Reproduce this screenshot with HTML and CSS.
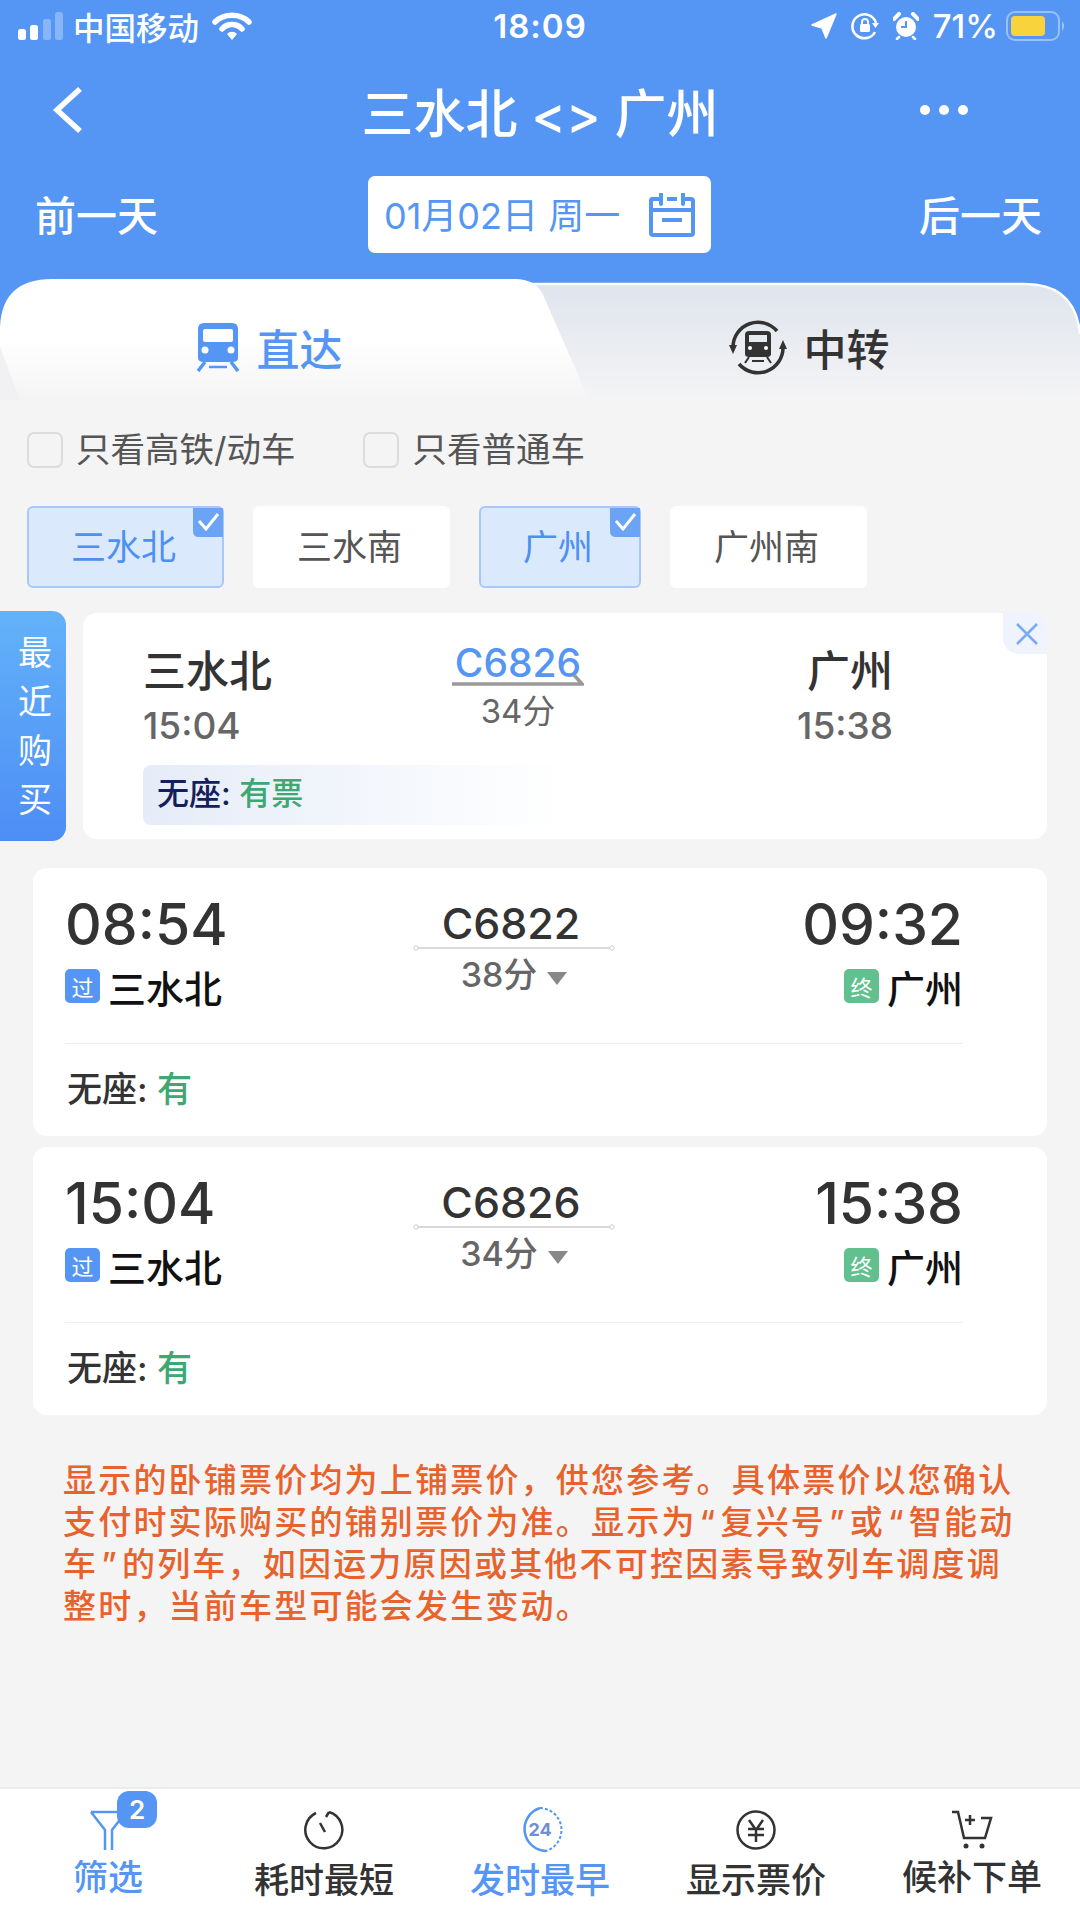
FILE: index.html
```html
<!DOCTYPE html>
<html lang="zh-CN">
<head>
    <meta charset="UTF-8">
    <meta name="viewport" content="width=device-width, initial-scale=1.0">
    <title>三水北 &lt;&gt; 广州</title>
    <link rel="stylesheet" href="styles.css">
</head>
<body>
<div class="page">

    <header class="header">
        <div class="status-bar">
            <div class="status-left">
                <svg class="signal" width="46" height="30" viewBox="0 0 46 30">
                    <rect x="0" y="18" width="8" height="11" rx="2.5" fill="#fff"/>
                    <rect x="12" y="14" width="8" height="15" rx="2.5" fill="#fff"/>
                    <rect x="25" y="8" width="8" height="21" rx="2.5" fill="#fff" opacity=".3"/>
                    <rect x="37" y="1" width="8" height="28" rx="2.5" fill="#fff" opacity=".3"/>
                </svg>
                <span class="carrier">中国移动</span>
                <svg class="wifi" width="40" height="30" viewBox="0 0 40 30">
                    <path d="M3 11 C12 2 28 2 37 11" fill="none" stroke="#fff" stroke-width="5.5" stroke-linecap="round"/>
                    <path d="M10 18 C15 12 25 12 30 18" fill="none" stroke="#fff" stroke-width="5.5" stroke-linecap="round"/>
                    <path d="M15 23 C18 20 22 20 25 23 L20 29 Z" fill="#fff"/>
                </svg>
            </div>
            <div class="status-time">18:09</div>
            <div class="status-right">
                <svg width="26" height="26" viewBox="0 0 26 26"><path d="M25 1 L15 25 L11 15 L1 12 Z" fill="#fff" stroke="#fff" stroke-width="1.5" stroke-linejoin="round"/></svg>
                <svg width="28" height="28" viewBox="0 0 28 28">
                    <path d="M24 20 A12 12 0 1 1 25 11" fill="none" stroke="#fff" stroke-width="2.6"/>
                    <path d="M21 11 H28 L24.5 16 Z" fill="#fff"/>
                    <rect x="9" y="12" width="10" height="8" rx="1.5" fill="#fff"/>
                    <path d="M11 12 V10 A3 3 0 0 1 17 10 V12" fill="none" stroke="#fff" stroke-width="1.8"/>
                </svg>
                <svg width="26" height="28" viewBox="0 0 26 28">
                    <circle cx="13" cy="15" r="10" fill="#fff"/>
                    <path d="M13 9 V15 H8" fill="none" stroke="#5596f4" stroke-width="2"/>
                    <path d="M1 7 L6 2 M25 7 L20 2" stroke="#fff" stroke-width="4" stroke-linecap="round"/>
                    <path d="M6 25 L4 27 M20 25 L22 27" stroke="#fff" stroke-width="2.5" stroke-linecap="round"/>
                </svg>
                <span class="battery-text">71%</span>
                <svg width="60" height="30" viewBox="0 0 60 30">
                    <rect x="1" y="1" width="52" height="28" rx="8" fill="none" stroke="#fff" stroke-opacity=".4" stroke-width="2"/>
                    <rect x="5" y="5" width="34" height="20" rx="4" fill="#f9d33c"/>
                    <path d="M56 10 Q60 15 56 20 Z" fill="#fff" fill-opacity=".45"/>
                </svg>
            </div>
        </div>

        <div class="nav">
            <div class="nav-side">
                <svg class="nav-back" width="32" height="46" viewBox="0 0 32 46"><path d="M28 2 L5 23 L28 44" fill="none" stroke="#fff" stroke-width="5.5"/></svg>
            </div>
            <h1 class="nav-title">三水北 &lt;&gt; 广州</h1>
            <div class="nav-side nav-more">
                <span class="dot"></span><span class="dot"></span><span class="dot"></span>
            </div>
        </div>

        <div class="date-row">
            <span class="date-link">前一天</span>
            <div class="date-box">
                <span class="date-text">01月02日 周一</span>
                <svg width="46" height="44" viewBox="0 0 46 44">
                    <path d="M12 6 H3 Q2 6 2 8 V40 Q2 42 4 42 H42 Q44 42 44 40 V8 Q44 6 42 6 H34 M18 6 H28 M2 17 H44" fill="none" stroke="#5596f4" stroke-width="4"/>
                    <path d="M12 1 V11 M34 1 V11" stroke="#5596f4" stroke-width="4" stroke-linecap="round"/>
                    <rect x="13" y="25" width="20" height="4" fill="#5596f4"/>
                </svg>
            </div>
            <span class="date-link">后一天</span>
        </div>
    </header>

    <div class="tabs">
        <svg class="tabs-bg" width="1080" height="121" viewBox="0 0 1080 121">
            <defs>
                <linearGradient id="tabGrey" x1="0" y1="0" x2="0" y2="1">
                    <stop offset="0" stop-color="#dfe4ed"/>
                    <stop offset="1" stop-color="#f4f4f5"/>
                </linearGradient>
                <linearGradient id="tabWhite" x1="0" y1="0" x2="0" y2="1">
                    <stop offset=".5" stop-color="#fff"/>
                    <stop offset="1" stop-color="#f4f4f5"/>
                </linearGradient>
            </defs>
            <rect width="1080" height="60" fill="#5596f4"/>
            <path d="M0 121 V60 Q0 5 50 5 H1025 Q1075 5 1080 55 V121 Z" fill="url(#tabGrey)"/>
            <path d="M500 5 H1025 Q1075 5 1080 55" fill="none" stroke="#fff" stroke-width="2.5"/>
            <path d="M0 121 V48 Q2 0 52 0 H515 Q537 0 544 18 L589 121 Z" fill="url(#tabWhite)"/>
            <path d="M0 121 V68 L20 121 Z" fill="#f1f1f3"/>
        </svg>
        <div class="tab tab-active">
            <svg width="44" height="50" viewBox="0 0 44 50">
                <path d="M8 1 H36 Q42 1 42 7 V36 Q42 40 36 40 H8 Q2 40 2 36 V7 Q2 1 8 1 Z" fill="#5596f4"/>
                <rect x="7" y="7" width="30" height="13" rx="2" fill="#fff"/>
                <circle cx="9" cy="28" r="3.5" fill="#fff"/>
                <circle cx="35" cy="28" r="3.5" fill="#fff"/>
                <path d="M9 40 L2 49 M35 40 L42 49" stroke="#5596f4" stroke-width="3.5"/>
                <path d="M13 45 H31" stroke="#5596f4" stroke-width="2.5"/>
            </svg>
            <span>直达</span>
        </div>
        <div class="tab">
            <svg width="58" height="56" viewBox="0 0 58 56">
                <path d="M4 28 A25 25 0 0 1 48 12 M54 28 A25 25 0 0 1 10 45" fill="none" stroke="#333" stroke-width="3.5"/>
                <path d="M0 26 L8 26 L4 35 Z M58 30 L50 30 L54 21 Z" fill="#333"/>
                <path d="M20 12 H38 Q42 12 42 16 V35 Q42 38 38 38 H20 Q16 38 16 35 V16 Q16 12 20 12 Z" fill="#333"/>
                <rect x="20" y="16" width="18" height="7" fill="#e6e9f0"/>
                <circle cx="21" cy="29" r="2" fill="#fff"/>
                <circle cx="37" cy="29" r="2" fill="#fff"/>
                <path d="M20 38 L16 44 M38 38 L42 44 M23 42 H35" stroke="#333" stroke-width="2"/>
            </svg>
            <span>中转</span>
        </div>
    </div>

    <div class="filters">
        <label class="check"><span class="check-box"></span><span class="check-text">只看高铁/动车</span></label>
        <label class="check"><span class="check-box"></span><span class="check-text">只看普通车</span></label>
    </div>

    <div class="chips">
        <div class="chip chip-on">三水北
            <svg class="chip-mark" width="30" height="29" viewBox="0 0 30 29"><path d="M0 0 H30 V29 H6 Q0 29 0 23 Z" fill="#6ba3f5"/><path d="M6 13 L13 21 L25 6" fill="none" stroke="#fff" stroke-width="3"/></svg>
        </div>
        <div class="chip">三水南</div>
        <div class="chip chip-on">广州
            <svg class="chip-mark" width="30" height="29" viewBox="0 0 30 29"><path d="M0 0 H30 V29 H6 Q0 29 0 23 Z" fill="#6ba3f5"/><path d="M6 13 L13 21 L25 6" fill="none" stroke="#fff" stroke-width="3"/></svg>
        </div>
        <div class="chip">广州南</div>
    </div>

    <div class="recent">
        <div class="recent-tab">最近购买</div>
        <div class="recent-card">
            <div class="recent-close">
                <svg width="24" height="24" viewBox="0 0 24 24"><path d="M2 2 L22 22 M22 2 L2 22" stroke="#7aabf2" stroke-width="2.5"/></svg>
            </div>
            <div class="recent-main">
                <div class="recent-stop">
                    <div class="recent-name">三水北</div>
                    <div class="recent-time">15:04</div>
                </div>
                <div class="recent-train">
                    <div class="recent-no">C6826</div>
                    <svg class="recent-arrow" width="132" height="12" viewBox="0 0 132 12"><path d="M0 10 H130 L122 1" fill="none" stroke="#999" stroke-width="3.5"/></svg>
                    <div class="recent-dur">34分</div>
                </div>
                <div class="recent-stop recent-stop-end">
                    <div class="recent-name">广州</div>
                    <div class="recent-time">15:38</div>
                </div>
            </div>
            <div class="recent-seat"><span class="seat-dark">无座:</span> <span class="seat-green">有票</span></div>
        </div>
    </div>

    <div class="train-card train-card-first">
        <div class="train-main">
            <div>
                <div class="train-time">08:54</div>
                <div class="train-stop"><span class="tag tag-blue">过</span>三水北</div>
            </div>
            <div class="train-mid">
                <div class="train-no">C6822</div>
                <svg class="train-line" width="202" height="8" viewBox="0 0 202 8"><path d="M4 4 H198" stroke="#ccc" stroke-width="1.5"/><circle cx="3" cy="4" r="2.2" fill="#fff" stroke="#ccc"/><circle cx="199" cy="4" r="2.2" fill="#fff" stroke="#ccc"/></svg>
                <div class="train-dur">38分<span class="tri"></span></div>
            </div>
            <div class="train-end">
                <div class="train-time">09:32</div>
                <div class="train-stop"><span class="tag tag-green">终</span>广州</div>
            </div>
        </div>
        <div class="train-seat">无座: <span class="seat-green">有</span></div>
    </div>

    <div class="train-card">
        <div class="train-main">
            <div>
                <div class="train-time">15:04</div>
                <div class="train-stop"><span class="tag tag-blue">过</span>三水北</div>
            </div>
            <div class="train-mid">
                <div class="train-no">C6826</div>
                <svg class="train-line" width="202" height="8" viewBox="0 0 202 8"><path d="M4 4 H198" stroke="#ccc" stroke-width="1.5"/><circle cx="3" cy="4" r="2.2" fill="#fff" stroke="#ccc"/><circle cx="199" cy="4" r="2.2" fill="#fff" stroke="#ccc"/></svg>
                <div class="train-dur">34分<span class="tri"></span></div>
            </div>
            <div class="train-end">
                <div class="train-time">15:38</div>
                <div class="train-stop"><span class="tag tag-green">终</span>广州</div>
            </div>
        </div>
        <div class="train-seat">无座: <span class="seat-green">有</span></div>
    </div>

    <p class="notice">显示的卧铺票价均为上铺票价，供您参考。具体票价以您确认<br>支付时实际购买的铺别票价为准。显示为<span class="quote">“</span>复兴号<span class="quote">”</span>或<span class="quote">“</span>智能动<br>车<span class="quote">”</span>的列车，如因运力原因或其他不可控因素导致列车调度调<br>整时，当前车型可能会发生变动。</p>

    <nav class="bottom-bar">
        <div class="bottom-item bottom-on">
            <div class="bottom-icon">
                <svg width="40" height="44" viewBox="0 0 40 44"><path d="M3 4 H38 L24 22 V42 M3 4 L17 22 V42" fill="none" stroke="#5596f4" stroke-width="2.5"/></svg>
                <span class="badge">2</span>
            </div>
            <span class="bottom-label bottom-label-up">筛选</span>
        </div>
        <div class="bottom-item">
            <div class="bottom-icon">
                <svg width="42" height="42" viewBox="0 0 42 42"><path d="M13 4 A18.5 18.5 0 1 0 26 3" fill="none" stroke="#333" stroke-width="2.5"/><path d="M26 3 L23 8 M17 14 L22 23" stroke="#333" stroke-width="2.5"/></svg>
            </div>
            <span class="bottom-label">耗时最短</span>
        </div>
        <div class="bottom-item bottom-on">
            <div class="bottom-icon">
                <svg width="48" height="48" viewBox="0 0 48 48">
                    <path d="M24 2 A22 22 0 0 0 30 45" fill="none" stroke="#5596f4" stroke-width="2.5"/>
                    <path d="M24 2 A22 22 0 0 1 30 45" fill="none" stroke="#5596f4" stroke-width="2" stroke-dasharray="3 2"/>
                    <text x="24" y="30" text-anchor="middle" class="icon-24">24</text>
                </svg>
            </div>
            <span class="bottom-label">发时最早</span>
        </div>
        <div class="bottom-item">
            <div class="bottom-icon">
                <svg width="42" height="42" viewBox="0 0 42 42"><circle cx="21" cy="21" r="18.5" fill="none" stroke="#333" stroke-width="2.5"/><path d="M14 11 L21 21 L28 11 M13 20 H29 M13 26 H29 M21 20 V33" fill="none" stroke="#333" stroke-width="2.5"/></svg>
            </div>
            <span class="bottom-label">显示票价</span>
        </div>
        <div class="bottom-item">
            <div class="bottom-icon">
                <svg width="42" height="40" viewBox="0 0 42 40">
                    <path d="M1 2 H7 L13 28 H34 L40 8 H30" fill="none" stroke="#333" stroke-width="2.5"/>
                    <path d="M19 5 V15 M14 10 H24" stroke="#333" stroke-width="2.5"/>
                    <circle cx="15" cy="36" r="2.5" fill="#333"/><circle cx="31" cy="36" r="2.5" fill="#333"/>
                </svg>
            </div>
            <span class="bottom-label bottom-label-up">候补下单</span>
        </div>
    </nav>

</div>
</body>
</html>
```
FILE: styles.css
```css
/* 1080x1920 ticket list screen */
* {
    box-sizing: border-box;
}
body {
    margin: 0;
    font-family: Inter, "Noto Sans CJK SC", sans-serif;
    color: #333;
}
.page {
    width: 1080px;
    height: 1920px;
    display: flex;
    flex-direction: column;
    background: #f4f4f5;
    overflow: hidden;
}

/* header */
.header {
    background: #5596f4;
    color: #fff;
    padding-bottom: 26px;
}
.status-bar {
    height: 52px;
    display: flex;
    align-items: center;
    padding: 0 14px 0 18px;
}
.status-left, .status-right {
    flex: 1;
    display: flex;
    align-items: center;
}
.status-right {
    justify-content: flex-end;
    gap: 14px;
}
.carrier {
    font-size: 31.5px;
    margin-left: 9px;
    font-weight: 500;
}
.wifi {
    margin-left: 13px;
}
.status-time {
    margin-left: -4px;
    font-size: 33px;
    font-weight: 600;
    letter-spacing: 1px;
}
.battery-text {
    font-size: 33px;
    font-weight: 500;
    margin: 0 -6px 0 0;
}
.nav {
    height: 90px;
    margin-top: 13px;
    display: flex;
    align-items: center;
    padding: 0 112px;
}
.nav-side {
    flex: 1;
    display: flex;
    align-items: center;
}
.nav-back {
    margin-left: -60px;
}
.nav-more {
    justify-content: flex-end;
    gap: 9px;
}
.dot {
    width: 10px;
    height: 10px;
    border-radius: 50%;
    background: #fff;
}
.nav-title {
    margin: 0;
    font-size: 52px;
    font-weight: 500;
    white-space: nowrap;
}
.date-row {
    margin-top: 21px;
    display: flex;
    align-items: center;
    justify-content: space-between;
    padding: 0 38px 0 35px;
}
.date-link {
    font-size: 41px;
    font-weight: 500;
    padding-bottom: 4px;
}
.date-box {
    width: 343px;
    height: 77px;
    margin-left: 2px;
    background: #fff;
    border-radius: 7px;
    color: #5596f4;
    font-size: 36px;
    display: flex;
    align-items: center;
    justify-content: space-between;
    padding: 0 16px;
}
.date-text {
    padding-bottom: 4px;
}

/* tabs */
.tabs {
    position: relative;
    height: 121px;
    display: grid;
    grid-template-columns: 538px 542px;
}
.tabs-bg {
    position: absolute;
    top: 0;
    left: 0;
}
.tab {
    position: relative;
    display: flex;
    align-items: center;
    justify-content: center;
    gap: 17px;
    font-size: 43px;
    font-weight: 500;
    color: #333;
    padding-top: 14px;
}
.tab-active {
    color: #5596f4;
}

/* filters */
.filters {
    display: flex;
    gap: 68px;
    padding: 32px 0 0 27px;
}
.check {
    display: flex;
    align-items: center;
    gap: 13px;
    height: 36px;
    font-size: 34.5px;
    color: #555;
}
.check-text {
    padding-bottom: 6px;
}
.check-box {
    width: 36px;
    height: 36px;
    border: 2px solid #dcdcdc;
    border-radius: 7px;
}
.chips {
    display: flex;
    gap: 29px;
    margin-top: 38px;
    padding-left: 27px;
}
.chip {
    position: relative;
    height: 82px;
    display: flex;
    align-items: center;
    padding: 0 46px 6px 42px;
    font-size: 35px;
    color: #555;
    background: #fff;
    border: 2px solid #fff;
    border-radius: 6px;
}
.chip-on {
    color: #4d8ff2;
    background: #dbe9fd;
    border-color: #a9c9f5;
}
.chip-mark {
    position: absolute;
    top: 0;
    right: -1px;
}

/* recent purchase */
.recent {
    display: flex;
    align-items: center;
    gap: 17px;
    margin-top: 23px;
}
.recent-tab {
    width: 66px;
    height: 230px;
    writing-mode: vertical-rl;
    display: flex;
    align-items: center;
    justify-content: center;
    padding-top: 14px;
    font-size: 34px;
    letter-spacing: 15px;
    color: #fff;
    background: linear-gradient(180deg, #63b2f9, #4d8df5);
    border-radius: 0 14px 14px 0;
}
.recent-card {
    position: relative;
    width: 964px;
    height: 226px;
    background: #fff;
    border-radius: 14px;
    padding: 23px 0 0 60px;
}
.recent-close {
    position: absolute;
    top: 0;
    right: 0;
    width: 44px;
    height: 41px;
    display: flex;
    align-items: center;
    justify-content: center;
    padding-left: 4px;
    background: #eef3fd;
    border-radius: 0 14px 0 16px;
}
.recent-main {
    display: flex;
    height: 129px;
}
.recent-stop {
    width: 255px;
}
.recent-stop-end {
    width: 100px;
    margin-left: 155px;
    display: flex;
    flex-direction: column;
    align-items: flex-end;
}
.recent-name {
    font-size: 43px;
    line-height: 70px;
    font-weight: 500;
}
.recent-time {
    font-size: 37px;
    line-height: 40px;
    font-weight: 500;
    color: #666;
}
.recent-train {
    width: 240px;
    padding-top: 2px;
    display: flex;
    flex-direction: column;
    align-items: center;
}
.recent-no {
    font-size: 39px;
    line-height: 50px;
    font-weight: 500;
    color: #5596f4;
}
.recent-arrow {
    display: block;
    margin-top: -14px;
}
.recent-dur {
    margin-top: 2px;
    font-size: 33px;
    line-height: 46px;
    color: #666;
}
.recent-seat {
    width: 420px;
    height: 60px;
    line-height: 58px;
    padding-left: 14px;
    font-size: 32px;
    font-weight: 500;
    border-radius: 8px 0 0 8px;
    background: linear-gradient(90deg, #e5ecf8, #ffffff);
}
.seat-dark {
    color: #14205c;
}
.seat-green {
    color: #3fa772;
}

/* train cards */
.train-card {
    width: 1014px;
    height: 268px;
    margin: 11px 0 0 33px;
    background: #fff;
    border-radius: 14px;
    padding: 20px 84px 0 32px;
}
.train-card-first {
    margin-top: 27px;
}
.train-main {
    display: grid;
    grid-template-columns: 348px 202px 1fr;
    height: 156px;
    border-bottom: 1px solid #eeeeee;
}
.train-time {
    font-size: 57px;
    line-height: 74px;
    font-weight: 500;
}
.train-stop {
    display: flex;
    align-items: center;
    height: 48px;
    font-size: 38px;
    font-weight: 500;
    color: #111;
}
.tag {
    width: 35px;
    height: 34px;
    display: flex;
    align-items: center;
    justify-content: center;
    margin-right: 8px;
    font-size: 22px;
    font-weight: 400;
    color: #fff;
    border-radius: 5px;
}
.tag-blue {
    background: #5596f4;
}
.tag-green {
    background: #62c08f;
}
.train-mid {
    padding-top: 10px;
    display: flex;
    flex-direction: column;
    align-items: center;
}
.train-no {
    margin-left: -6px;
    font-size: 43px;
    line-height: 50px;
    font-weight: 500;
}
.train-line {
    display: block;
    margin: -4px 0 -2px;
}
.train-dur {
    display: flex;
    align-items: center;
    gap: 10px;
    font-size: 34px;
    line-height: 50px;
    font-weight: 500;
    color: #666;
}
.tri {
    width: 0;
    height: 0;
    margin-top: 6px;
    border-left: 10px solid transparent;
    border-right: 10px solid transparent;
    border-top: 13px solid #888;
}
.train-end {
    display: flex;
    flex-direction: column;
    align-items: flex-end;
}
.train-seat {
    height: 91px;
    line-height: 91px;
    padding-left: 2px;
    font-size: 35px;
    font-weight: 500;
}

/* notice */
.notice {
    margin: 44px 0 0 63px;
    font-size: 33px;
    font-weight: 500;
    line-height: 42px;
    letter-spacing: 2.2px;
    color: #e8622c;
    white-space: nowrap;
}
.quote {
    padding: 0 3px;
}

/* bottom bar */
.bottom-bar {
    margin-top: auto;
    height: 133px;
    display: grid;
    grid-template-columns: repeat(5, 216px);
    background: #fff;
    border-top: 2px solid #ececec;
}
.bottom-item {
    display: flex;
    flex-direction: column;
    align-items: center;
    padding-top: 11px;
    color: #333;
}
.bottom-on {
    color: #5596f4;
}
.bottom-icon {
    position: relative;
    height: 60px;
    display: flex;
    align-items: center;
    justify-content: center;
}
.bottom-label {
    font-size: 35px;
    line-height: 40px;
    font-weight: 500;
}
.bottom-label-up {
    margin-top: -3px;
}
.badge {
    position: absolute;
    top: -9px;
    left: 29px;
    width: 40px;
    height: 37px;
    display: flex;
    align-items: center;
    justify-content: center;
    font-size: 26px;
    font-weight: 600;
    color: #fff;
    background: #5596f4;
    border-radius: 12px;
}
.icon-24 {
    font-size: 18px;
    font-weight: 700;
    fill: #6f8fd6;
}
```
